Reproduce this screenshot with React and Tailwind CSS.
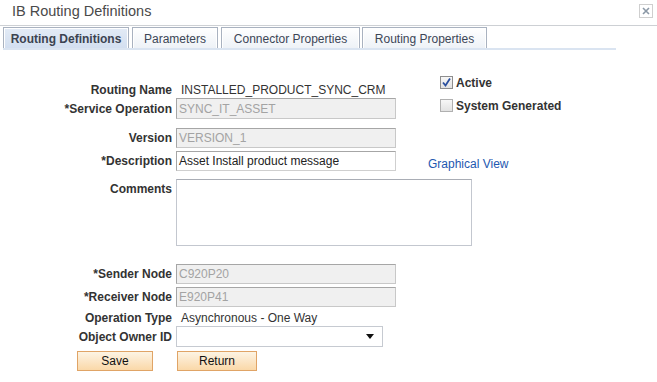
import React from "react";

function Label({ children, className = "" }) {
  return (
    <div className={"w-[172px] shrink-0 text-right font-bold text-[#333] " + className}>{children}</div>
  );
}

function DisabledInput({ value, h = "h-[20px]" }) {
  return (
    <div className={"ml-[4px] w-[220px] " + h + " border border-[#a6a6a6] border-b-[#c8c8c8] border-r-[#c8c8c8] bg-[#f0f0f0] pl-[2px] flex items-center text-[#a3a3a3]"}>
      {value}
    </div>
  );
}

function Tab({ children, active, w }) {
  return (
    <div
      className={
        "h-[21px] border border-[#a9b2c0] border-b-0 flex items-center justify-center " +
        w +
        (active
          ? " bg-gradient-to-b from-[#e3ebf6] to-[#d3dff0] font-bold text-[#3c4350]"
          : " bg-gradient-to-b from-[#ffffff] to-[#eef2f7] text-[#3c4656]")
      }
    >
      <div className="w-full h-full border border-white border-b-0 flex items-center justify-center">{children}</div>
    </div>
  );
}

function Checkbox({ checked }) {
  return (
    <div className={"w-[13px] h-[13px] border " + (checked ? "border-[#8e8e8e]" : "border-[#b0b0b0]") + " bg-gradient-to-b from-[#f7f7f7] to-[#e2e2e2] flex items-center justify-center"}>
      {checked && (
        <svg width="11" height="11" viewBox="0 0 11 11">
          <path d="M2 5.5 L4.5 8.5 L9 1.5" stroke="#2a4f9e" strokeWidth="1.8" fill="none" />
        </svg>
      )}
    </div>
  );
}

export default function App() {
  return (
    <div className="w-[657px] h-[382px] bg-white text-[12px] leading-[14px] text-[#333]" style={{ fontFamily: "'Liberation Sans', Arial, sans-serif" }}>
      {/* header */}
      <div className="h-[25px] flex items-start justify-between">
        <div className="pl-[12px] pt-[3px] text-[14.5px] leading-[17px] text-[#4a4a4a]">IB Routing Definitions</div>
        <div className="mt-[4px] mr-[4px] w-[14px] h-[14px] border border-[#cfcfcf] flex items-center justify-center">
          <svg width="8" height="8" viewBox="0 0 8 8">
            <path d="M1 1 L7 7 M7 1 L1 7" stroke="#8b98a6" strokeWidth="1.6" />
          </svg>
        </div>
      </div>
      <div className="h-px bg-[#cdd0d4]"></div>
      {/* tabs */}
      <div className="mt-[1px] pl-[3px] flex">
        <Tab active w="w-[126px]">Routing Definitions</Tab>
        <div className="w-[3px]"></div>
        <Tab w="w-[86px]">Parameters</Tab>
        <div className="w-[3px]"></div>
        <Tab w="w-[139px]">Connector Properties</Tab>
        <div className="w-[2px]"></div>
        <Tab w="w-[125px]">Routing Properties</Tab>
      </div>
      <div className="ml-[3px] w-[613px] h-[2px] bg-[#dae4f1]"></div>

      {/* form */}
      <div className="mt-[24px] flex">
        <div className="w-[396px] pt-[9px]">
          <div className="flex items-center h-[14px]">
            <Label>Routing Name</Label>
            <div className="ml-[9px]">INSTALLED_PRODUCT_SYNC_CRM</div>
          </div>
          <div className="flex items-center mt-[1px]">
            <Label>*Service Operation</Label>
            <DisabledInput value="SYNC_IT_ASSET" h="h-[21px]" />
          </div>
          <div className="flex items-center mt-[9px]">
            <Label>Version</Label>
            <DisabledInput value="VERSION_1" />
          </div>
          <div className="flex items-center mt-[3px]">
            <Label>*Description</Label>
            <div className="ml-[4px] w-[220px] h-[20px] border border-[#a6a6a6] border-b-[#cfcfcf] border-r-[#cfcfcf] bg-white pl-[2px] flex items-center text-[#222]">
              Asset Install product message
            </div>
          </div>
        </div>
        <div className="ml-[32px] flex flex-col">
          <div className="pl-[12px] mt-[2px] flex items-center h-[13px]">
            <Checkbox checked />
            <span className="ml-[3px] font-bold text-[#333]">Active</span>
          </div>
          <div className="pl-[12px] mt-[10px] flex items-center h-[13px]">
            <Checkbox />
            <span className="ml-[3px] font-bold text-[#333]">System Generated</span>
          </div>
          <div className="mt-[45px] text-[#1e58b0]">Graphical View</div>
        </div>
      </div>

      <div className="flex items-start mt-[8px]">
        <Label className="pt-[3px]">Comments</Label>
        <div className="ml-[4px] w-[296px] h-[67px] border border-[#c3c7cf] border-t-[#a9adb5] bg-white"></div>
      </div>

      <div className="flex items-center mt-[18px]">
        <Label>*Sender Node</Label>
        <DisabledInput value="C920P20" />
      </div>
      <div className="flex items-center mt-[3px]">
        <Label>*Receiver Node</Label>
        <DisabledInput value="E920P41" />
      </div>
      <div className="flex items-center h-[14px] mt-[4px]">
        <Label>Operation Type</Label>
        <div className="ml-[9px]">Asynchronous - One Way</div>
      </div>
      <div className="flex items-center mt-[1px]">
        <Label>Object Owner ID</Label>
        <div className="ml-[4px] w-[207px] h-[21px] border border-[#c6cad1] bg-white flex items-center justify-end pr-[8px]">
          <svg width="8" height="5" viewBox="0 0 8 5">
            <path d="M0 0 L8 0 L4 5 Z" fill="#111" />
          </svg>
        </div>
      </div>
      <div className="flex mt-[4px] pl-[77px]">
        <div className="w-[76px] h-[20px] border border-[#e0a466] bg-gradient-to-b from-[#fdf4e4] to-[#fad8a8] flex items-center justify-center text-[#111]">Save</div>
        <div className="ml-[24px] w-[80px] h-[20px] border border-[#e0a466] bg-gradient-to-b from-[#fdf4e4] to-[#fad8a8] flex items-center justify-center text-[#111]">Return</div>
      </div>
    </div>
  );
}
